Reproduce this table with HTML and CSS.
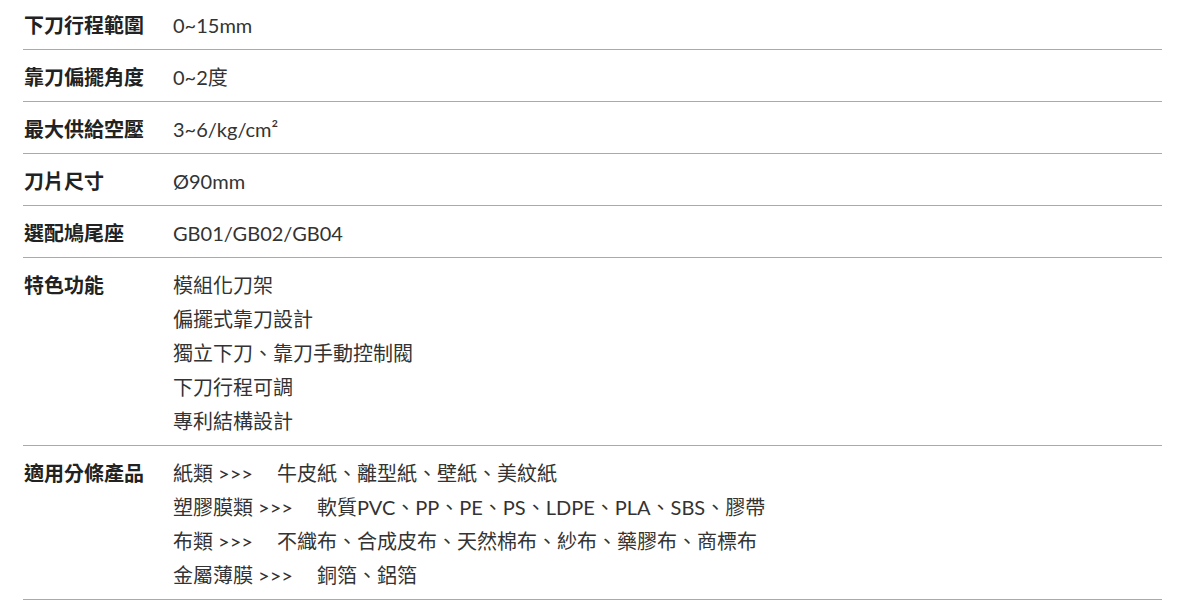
FILE: index.html
```html
<!DOCTYPE html>
<html lang="zh-Hant">
<head>
    <meta charset="UTF-8">
    <meta name="viewport" content="width=device-width, initial-scale=1.0">
    <title>規格</title>
    <link rel="stylesheet" href="styles.css">
</head>
<body>
    <div class="spec-table">
        <div class="spec-row">
            <div class="spec-label">下刀行程範圍</div>
            <div class="spec-value">0~15mm</div>
        </div>
        <div class="spec-row">
            <div class="spec-label">靠刀偏擺角度</div>
            <div class="spec-value">0~2度</div>
        </div>
        <div class="spec-row">
            <div class="spec-label">最大供給空壓</div>
            <div class="spec-value">3~6/kg/cm²</div>
        </div>
        <div class="spec-row">
            <div class="spec-label">刀片尺寸</div>
            <div class="spec-value">Ø90mm</div>
        </div>
        <div class="spec-row">
            <div class="spec-label">選配鳩尾座</div>
            <div class="spec-value">GB01/GB02/GB04</div>
        </div>
        <div class="spec-row">
            <div class="spec-label">特色功能</div>
            <div class="spec-value">
                <div>模組化刀架</div>
                <div>偏擺式靠刀設計</div>
                <div>獨立下刀、靠刀手動控制閥</div>
                <div>下刀行程可調</div>
                <div>專利結構設計</div>
            </div>
        </div>
        <div class="spec-row">
            <div class="spec-label">適用分條產品</div>
            <div class="spec-value">
                <div><span class="cat">紙類 &gt;&gt;&gt;</span>牛皮紙、離型紙、壁紙、美紋紙</div>
                <div><span class="cat">塑膠膜類 &gt;&gt;&gt;</span>軟質PVC、PP、PE、PS、LDPE、PLA、SBS、膠帶</div>
                <div><span class="cat">布類 &gt;&gt;&gt;</span>不織布、合成皮布、天然棉布、紗布、藥膠布、商標布</div>
                <div><span class="cat">金屬薄膜 &gt;&gt;&gt;</span>銅箔、鋁箔</div>
            </div>
        </div>
    </div>
</body>
</html>
```

FILE: styles.css
```css
body {
    font-family: Lato, "Noto Sans CJK TC", sans-serif;
    margin: 0;
    padding: 0;
    background-color: #ffffff;
    color: #333333;
}

.spec-table {
    width: 1139px;
    margin: 0 0 0 23px;
}

.spec-row {
    display: flex;
    padding: 10px 0 7px 0;
    border-bottom: 1px solid #aaaaaa;
    font-size: 20px;
    line-height: 34px;
}

.spec-row:first-child {
    padding-top: 8px;
}

.spec-label {
    width: 149px;
    flex-shrink: 0;
    padding-left: 1px;
    font-weight: bold;
    color: #222222;
}

.spec-value {
    flex: 1;
}

.cat {
    margin-right: 24px;
}
```
